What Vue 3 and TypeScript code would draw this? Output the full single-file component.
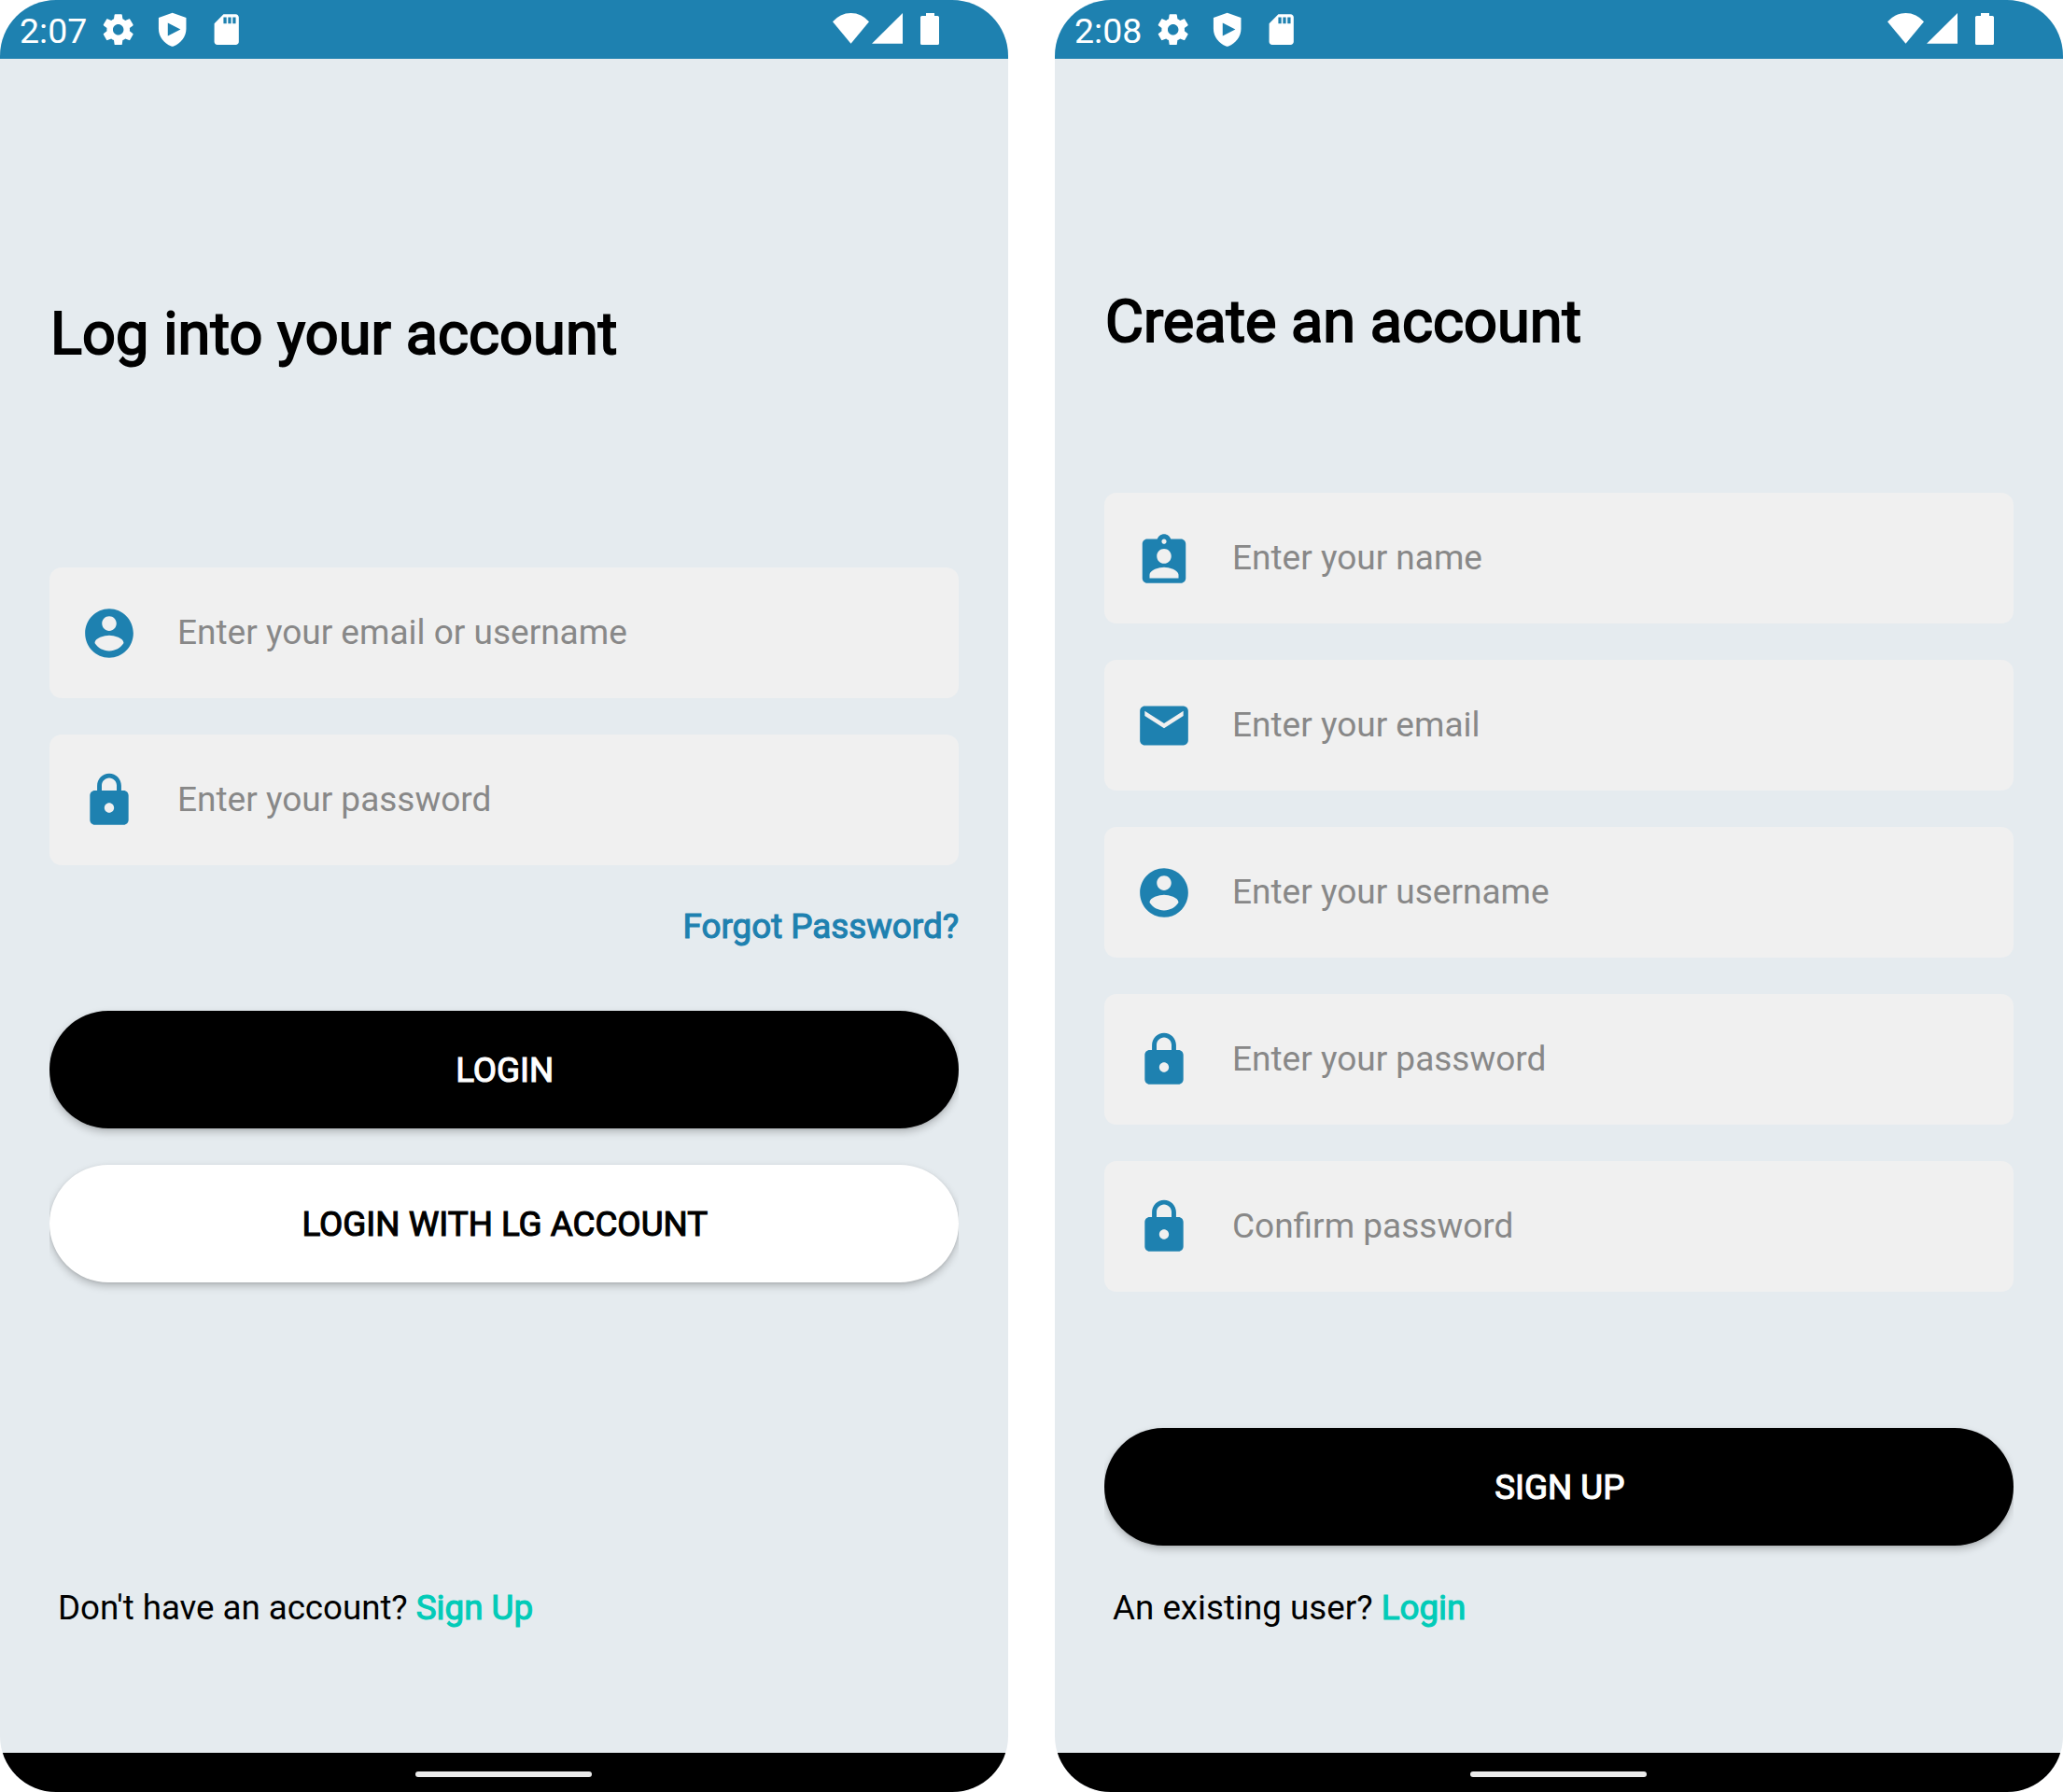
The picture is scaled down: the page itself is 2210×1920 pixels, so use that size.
<script setup lang="ts">
type IconName = 'person' | 'lock' | 'badge' | 'mail'

interface Field {
  icon: IconName
  hint: string
}

interface Action {
  label: string
  tone: 'dark' | 'light'
}

interface Screen {
  id: string
  time: string
  title: string
  fields: Field[]
  forgot?: string
  actions: Action[]
  question: string
  link: string
}

const icons: Record<IconName, string> = {
  person:
    'M12 2C6.48 2 2 6.48 2 12s4.48 10 10 10 10-4.48 10-10S17.52 2 12 2zm0 3c1.66 0 3 1.34 3 3s-1.34 3-3 3-3-1.34-3-3 1.34-3 3-3zm0 14.2c-2.5 0-4.71-1.28-6-3.22.03-1.99 4-3.08 6-3.08 1.99 0 5.97 1.09 6 3.08-1.29 1.94-3.5 3.22-6 3.22z',
  lock:
    'M18 8h-1V6c0-2.76-2.24-5-5-5S7 3.24 7 6v2H6c-1.1 0-2 .9-2 2v10c0 1.1.9 2 2 2h12c1.1 0 2-.9 2-2V10c0-1.1-.9-2-2-2zm-6 9c-1.1 0-2-.9-2-2s.9-2 2-2 2 .9 2 2-.9 2-2 2zm3.1-9H8.9V6c0-1.71 1.39-3.1 3.1-3.1 1.71 0 3.1 1.39 3.1 3.1v2z',
  badge:
    'M19 4h-4.18C14.4 2.84 13.3 2 12 2c-1.3 0-2.4.84-2.82 2H5c-1.1 0-2 .9-2 2v14c0 1.1.9 2 2 2h14c1.1 0 2-.9 2-2V6c0-1.1-.9-2-2-2zm-7 0c.55 0 1 .45 1 1s-.45 1-1 1-1-.45-1-1 .45-1 1-1zm0 4c1.66 0 3 1.34 3 3s-1.34 3-3 3-3-1.34-3-3 1.34-3 3-3zm6 12H6v-1.4c0-2 4-3.1 6-3.1s6 1.1 6 3.1V20z',
  mail:
    'M20 4H4c-1.1 0-1.99.9-1.99 2L2 18c0 1.1.9 2 2 2h16c1.1 0 2-.9 2-2V6c0-1.1-.9-2-2-2zm0 4l-8 5-8-5V6l8 5 8-5v2z',
}

const screens: Screen[] = [
  {
    id: 'login',
    time: '2:07',
    title: 'Log into your account',
    fields: [
      { icon: 'person', hint: 'Enter your email or username' },
      { icon: 'lock', hint: 'Enter your password' },
    ],
    forgot: 'Forgot Password?',
    actions: [
      { label: 'LOGIN', tone: 'dark' },
      { label: 'LOGIN WITH LG ACCOUNT', tone: 'light' },
    ],
    question: "Don't have an account?",
    link: 'Sign Up',
  },
  {
    id: 'signup',
    time: '2:08',
    title: 'Create an account',
    fields: [
      { icon: 'badge', hint: 'Enter your name' },
      { icon: 'mail', hint: 'Enter your email' },
      { icon: 'person', hint: 'Enter your username' },
      { icon: 'lock', hint: 'Enter your password' },
      { icon: 'lock', hint: 'Confirm password' },
    ],
    actions: [{ label: 'SIGN UP', tone: 'dark' }],
    question: 'An existing user?',
    link: 'Login',
  },
]
</script>

<template>
  <main class="board">
    <section v-for="s in screens" :key="s.id" class="phone" :class="s.id">
      <header class="status">
        <span class="time">{{ s.time }}</span>
        <div class="notices">
          <svg class="notice" viewBox="0 0 24 24">
            <path
              d="M19.43 12.98c.04-.32.07-.64.07-.98s-.03-.66-.07-.98l2.11-1.65c.19-.15.24-.42.12-.64l-2-3.46c-.12-.22-.39-.3-.61-.22l-2.49 1c-.52-.4-1.08-.73-1.69-.98l-.38-2.65C14.46 2.18 14.25 2 14 2h-4c-.25 0-.46.18-.49.42l-.38 2.65c-.61.25-1.17.59-1.69.98l-2.49-1c-.23-.09-.49 0-.61.22l-2 3.46c-.13.22-.07.49.12.64l2.11 1.65c-.04.32-.07.65-.07.98s.03.66.07.98l-2.11 1.65c-.19.15-.24.42-.12.64l2 3.46c.12.22.39.3.61.22l2.49-1c.52.4 1.08.73 1.69.98l.38 2.65c.03.24.24.42.49.42h4c.25 0 .46-.18.49-.42l.38-2.65c.61-.25 1.17-.59 1.69-.98l2.49 1c.23.09.49 0 .61-.22l2-3.46c.12-.22.07-.49-.12-.64l-2.11-1.65zM12 15.5c-1.93 0-3.5-1.57-3.5-3.5s1.57-3.5 3.5-3.5 3.5 1.57 3.5 3.5-1.57 3.5-3.5 3.5z"
            />
          </svg>
          <svg class="notice" viewBox="0 0 24 24">
            <path
              fill-rule="evenodd"
              d="M12 1L21 4.2V11.6C21 16.6 17.4 21.2 12.8 22.8Q12 23.1 11.2 22.8C6.6 21.2 3 16.6 3 11.6V4.2ZM9 7.6V16.2L17.3 11.9Z"
            />
          </svg>
          <svg class="notice" viewBox="0 0 24 24">
            <path
              d="M18 2h-8L4.02 8 4 20c0 1.1.9 2 2 2h12c1.1 0 2-.9 2-2V4c0-1.1-.9-2-2-2zm-6 6h-2V4h2v4zm3 0h-2V4h2v4zm3 0h-2V4h2v4z"
            />
          </svg>
        </div>
        <div class="signals">
          <svg class="wifi" viewBox="0 0 39 33">
            <path d="M0 9.3A25.1 25.1 0 0 1 39 9.3L19.5 32.8Z" />
          </svg>
          <svg class="cell" viewBox="0 0 33 33"><path d="M33 0V32.8H0Z" /></svg>
          <svg class="battery" viewBox="0 0 20 34">
            <path d="M6 0H15V3H18.4Q20 3 20 4.6V32.4Q20 34 18.4 34H1.6Q0 34 0 32.4V4.6Q0 3 1.6 3H6Z" />
          </svg>
        </div>
      </header>

      <div class="body">
        <h1 class="title">{{ s.title }}</h1>

        <div class="fields">
          <label v-for="f in s.fields" :key="f.hint" class="field">
            <svg class="field-icon" viewBox="0 0 24 24" preserveAspectRatio="none"><path :d="icons[f.icon]" /></svg>
            <span class="hint">{{ f.hint }}</span>
          </label>
        </div>

        <a v-if="s.forgot" class="forgot">{{ s.forgot }}</a>

        <div class="actions">
          <button v-for="a in s.actions" :key="a.label" type="button" class="action" :class="a.tone">
            {{ a.label }}
          </button>
        </div>

        <p class="switch"><span class="question">{{ s.question }}</span>&#32;<a class="link">{{ s.link }}</a></p>
      </div>

      <footer class="nav"><span class="pill"></span></footer>
    </section>
  </main>
</template>

<style>
html,
body {
  margin: 0;
  background: #fff;
}
</style>

<style scoped>
.board {
  display: flex;
  gap: 50px;
  width: 2210px;
  height: 1920px;
  background: #fff;
  font-family: Roboto, sans-serif;
  font-size: 36.75px;
  line-height: 43px;
  color: #000;
}

.phone {
  display: flex;
  flex-direction: column;
  width: 1080px;
  height: 1920px;
  border-radius: 60px;
  overflow: hidden;
  background: #e5ebef;
}

.status {
  display: flex;
  align-items: flex-start;
  box-sizing: border-box;
  height: 63px;
  padding: 12px 74px 0 21px;
  background: #1e81b0;
  color: #fff;
}

.status svg {
  display: block;
  fill: #fff;
}

.time {
  width: 86px;
  font-size: 37.5px;
  white-space: nowrap;
}

.notices {
  display: flex;
  gap: 18.6px;
}

.notice {
  width: 39.4px;
  height: 39.4px;
}

.signals {
  display: flex;
  margin-left: auto;
  padding-top: 2px;
}

.wifi {
  width: 39px;
  height: 33px;
  margin-right: 3px;
}

.cell {
  width: 33px;
  height: 33px;
  margin-right: 19px;
}

.battery {
  width: 20px;
  height: 34px;
}

.body {
  flex: 1;
  display: flex;
  flex-direction: column;
  padding: 0 53px;
}

.title {
  margin: 258px 0 213px 1px;
  font-size: 63px;
  font-weight: 400;
  line-height: 74px;
  letter-spacing: 0.08px;
  -webkit-text-stroke: 1.97px #000;
}

.signup .title {
  margin: 245px 0 146px 1px;
  letter-spacing: 0;
}

.fields,
.actions {
  display: flex;
  flex-direction: column;
  gap: 39px;
}

.field {
  display: flex;
  align-items: center;
  box-sizing: border-box;
  height: 140px;
  padding-left: 33px;
  border-radius: 13px;
  background: #f0f0f0;
}

.field-icon {
  width: 62px;
  height: 63px;
  margin-right: 42px;
  fill: #1e81b0;
}

.hint {
  padding-bottom: 2px;
  color: #888;
  font-size: 37px;
}

.forgot {
  align-self: flex-end;
  margin: 44px 0 69px;
  overflow: hidden;
  color: #1e81b0;
  -webkit-text-stroke: 1.15px #1e81b0;
}

.signup .actions {
  margin-top: 146px;
}

.actions {
  clip-path: inset(-30px 0);
}

.action {
  height: 126px;
  padding: 0 0 0 1.5px;
  border: 0;
  border-radius: 63px;
  font: inherit;
  box-shadow: 0 4px 9px rgba(0, 0, 0, 0.22), 0 1px 3px rgba(0, 0, 0, 0.08);
}

.dark {
  background: #000;
  color: #fff;
  -webkit-text-stroke: 1.15px #fff;
}

.light {
  background: #fff;
  color: #000;
  -webkit-text-stroke: 1.15px #000;
}

.switch {
  margin: auto 0 134px 9px;
  white-space: pre;
}

.login .question {
  letter-spacing: -0.06px;
}

.link {
  color: #02cbb8;
  -webkit-text-stroke: 1.15px #02cbb8;
}

.nav {
  display: flex;
  align-items: center;
  justify-content: center;
  height: 42px;
  padding: 4px 1px 0 0;
  box-sizing: border-box;
  background: #000;
}

.pill {
  width: 189px;
  height: 6px;
  border-radius: 3px;
  background: #ebebeb;
}
</style>
